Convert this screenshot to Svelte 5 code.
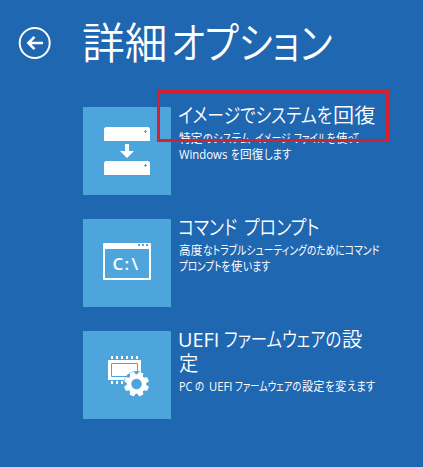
<script>
  // Each run is [text, start, end, kind]; kana is set narrower than kanji.
  const title = [['詳細', 0, 86], ['オプション', 89, 251, 'kana']];
  const items = [
    {
      icon: 'image',
      heading: [[['イメージでシステムを', -1, 154, 'kana'], ['回復', 154, 197]]],
      body: [
        [['特定', 0, 24], ['のシステム', 24, 72, 'kana'], ['イメージ', 76, 112, 'kana'], ['ファイルを', 115, 157, 'kana'], ['使', 157, 169], ['って', 169, 181, 'kana']],
        [['Windows', 0, 49, 'latin'], ['を', 52, 61, 'kana'], ['回復', 61, 85], ['します', 85, 113, 'kana']]
      ]
    },
    {
      icon: 'prompt',
      heading: [[['コマンド', -1, 59, 'kana'], ['プロンプト', 65, 141, 'kana']]],
      body: [
        [['高度', 0, 24], ['なトラブルシューティングのためにコマンド', 24, 201, 'kana']],
        [['プロンプトを', 0, 52, 'kana'], ['使', 52, 64], ['います', 64, 92, 'kana']]
      ]
    },
    {
      icon: 'firmware',
      heading: [
        [['UEFI', -1, 41, 'latin'], ['ファームウェアの', 45, 163, 'kana'], ['設', 163, 184]],
        [['定', 0, 20]]
      ],
      body: [
        [['PC', 0, 14, 'latin'], ['の', 16, 26, 'kana'], ['UEFI', 30, 54, 'latin'], ['ファームウェアの', 56, 123, 'kana'], ['設定', 123, 146], ['を', 146, 156, 'kana'], ['変', 156, 168], ['えます', 168, 197, 'kana']]
      ]
    }
  ];
  const teeth = [0, 45, 90, 135, 180, 225, 270, 315];
</script>

{#snippet line(runs, height, baseline)}
  <svg class="line" width="260" {height}>
    <text y={baseline}>{#each runs as [text, from, to, kind]}<tspan class={kind ?? 'kanji'} x={from} textLength={to - from - 0.7} lengthAdjust="spacingAndGlyphs">{text}</tspan>{/each}</text>
  </svg>
{/snippet}

<main>
  <header>
    <svg class="back" width="34" height="34" viewBox="0 0 34 34">
      <circle cx="16.700" cy="17" r="15" fill="none" stroke="#fff" stroke-width="2" />
      <path d="M25 17H10.5M16.5 10.8L10.3 17l6.2 6.2" fill="none" stroke="#fff" stroke-width="2.5" />
    </svg>
    <h1>{@render line(title, 60, 45.5)}</h1>
  </header>
  <section>
    {#each items as item}
      <article>
        <div class="tile">
          <svg width="88" height="88" viewBox="0 0 88 88" fill="#fff">
            {#if item.icon === 'image'}
              <path d="M21 34V22.5q0-2.500 2.500-2.500h41q2.500 0 2.500 2.500V34zM21 68V56.500q0-2.500 2.500-2.500h41q2.500 0 2.500 2.500V68z" />
              <path d="M62.500 23v3M61 24.500h3M62.500 57v3M61 58.500h3" stroke="#4da5dc" />
              <path d="M42 37h4v7h5l-7 7-7-7h5z" />
            {:else if item.icon === 'prompt'}
              <path fill-rule="evenodd" d="M21 24h46q1 0 1 1v35q0 1-1 1H21q-1 0-1-1V25q0-1 1-1zM22 30v29h44V30z" />
              <path d="M55 25h2v2h-2zM59 25h2v2h-2zM63 25h2v2h-2z" fill="#4da5dc" />
              <text class="drive" x="29.500 41.500 48.500" y="50.500">C:\</text>
            {:else}
              <path d="M28 25h2v3h-2zm5 0h2v3h-2zm5 0h2v3h-2zm5 0h2v3h-2zm5 0h2v3h-2zm5 0h2v3h-2zM28 50h2v3h-2zm5 0h2v3h-2zm5 0h2v3h-2z" />
              <path d="M25 29h33v20H25z" />
              <path d="M28.500 32.500h26v13h-26z" fill="none" stroke="#4da5dc" />
              <circle cx="53.500" cy="53" r="13" fill="#4da5dc" />
              <circle cx="53.500" cy="53" r="7.500" fill="none" stroke="#fff" stroke-width="4.500" />
              {#each teeth as angle}
                <path d="M51 44l.6-3h3.800L56 44z" stroke="#fff" stroke-width="1" stroke-linejoin="round" transform="rotate({angle + 22.5} 53.5 53)" />
              {/each}
            {/if}
          </svg>
        </div>
        <div class="copy">
          <h2>{#each item.heading as runs}{@render line(runs, 24, 19)}{/each}</h2>
          <p>{#each item.body as runs}{@render line(runs, 16, 12)}{/each}</p>
        </div>
      </article>
    {/each}
  </section>
  <div class="marker"></div>
</main>

<style>
  :global(body) { background: #2067b2; }
  main {
    position: relative;
    box-sizing: border-box;
    width: 423px;
    height: 467px;
    overflow: hidden;
    background: #2067b2;
    color: #fff;
    font-family: "Noto Sans CJK JP", sans-serif;
  }
  header { display: flex; height: 107px; padding: 13px 0 0 18px; box-sizing: border-box; }
  .back { margin-top: 13px; flex: none; }
  h1, h2, p { margin: 0; font-weight: 350; }
  h1 { margin-left: 30px; font-size: 43px; }
  h2 { font-size: 20.5px; }
  p { font-size: 12px; font-weight: 400; }
  .line { display: block; overflow: visible; }
  text { fill: #fff; }
  .kana { font-feature-settings: "palt"; }
  .latin { font-family: "Open Sans", "Noto Sans", sans-serif; }
  h2 .latin { font-weight: 400; }
  .drive { font: 600 17px "Open Sans", sans-serif; }
  section { display: flex; flex-direction: column; gap: 24px; padding-left: 83px; }
  article { display: flex; height: 88px; }
  .tile { width: 88px; height: 88px; background: #4da5dc; flex: none; }
  .copy { margin: -3px 0 0 8px; }
  p { padding-top: 3px; }
  .marker {
    position: absolute;
    left: 157px;
    top: 90px;
    width: 232px;
    height: 52px;
    box-sizing: border-box;
    border: 3px solid #d5202f;
  }
</style>
